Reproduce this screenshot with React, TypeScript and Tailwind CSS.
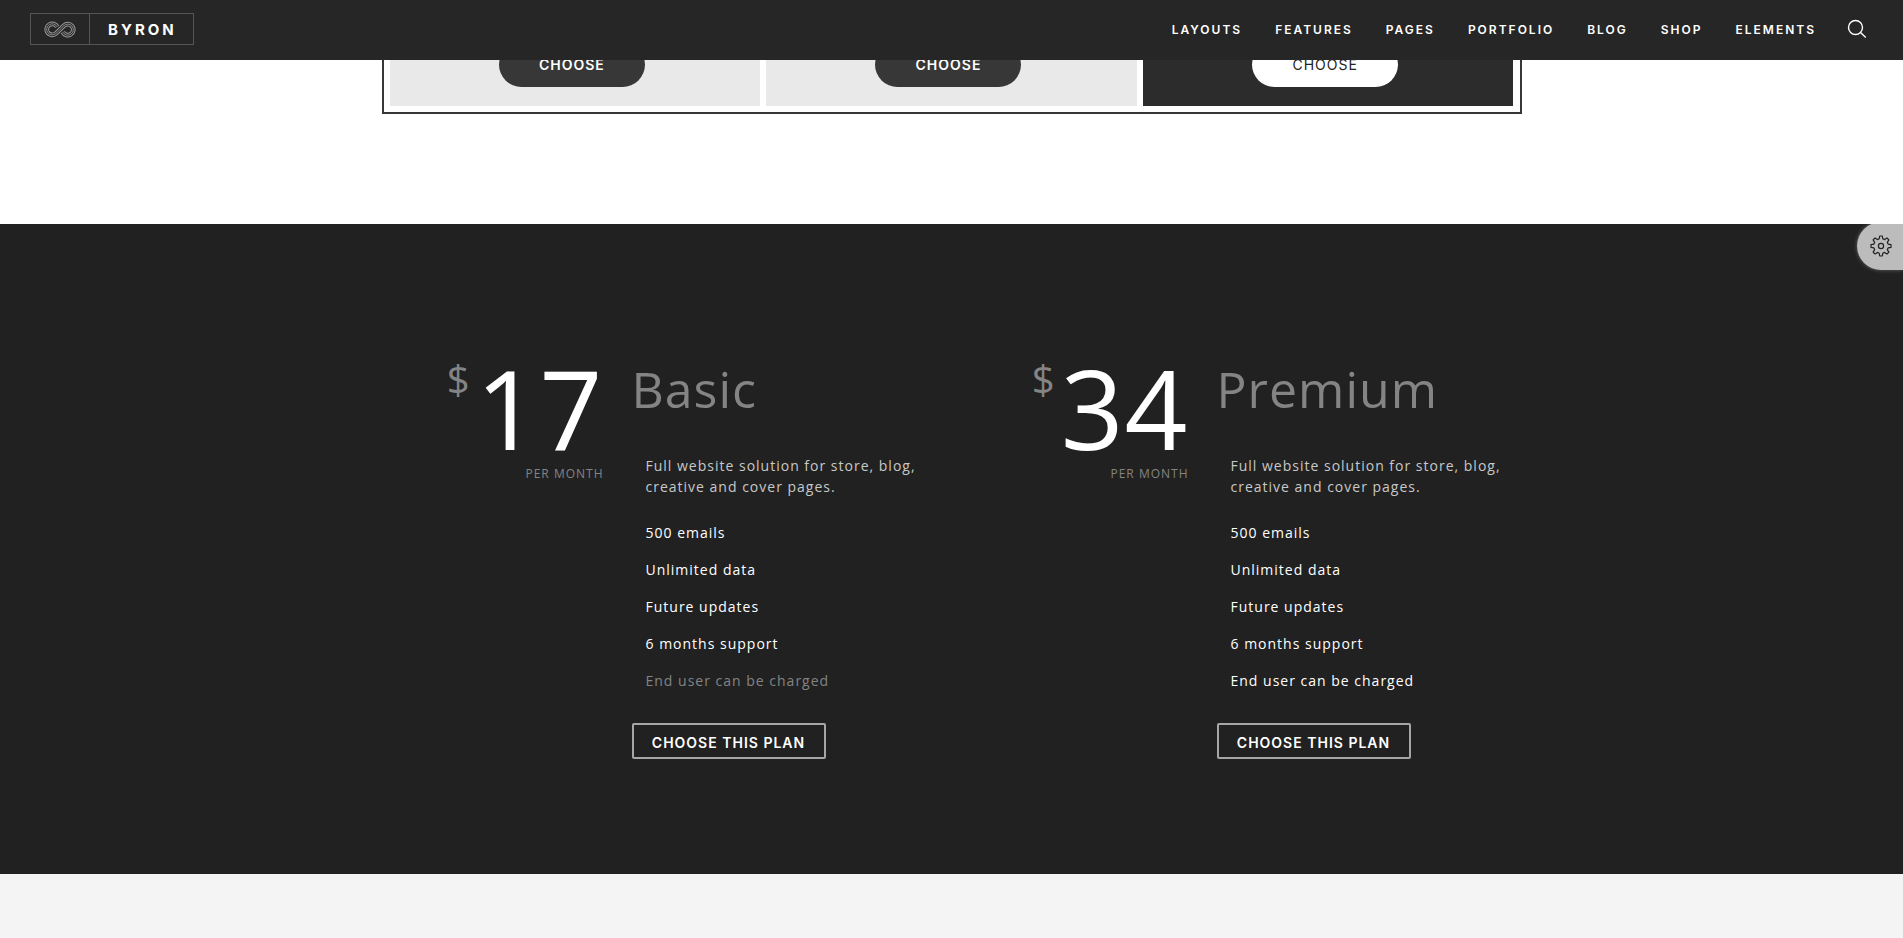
const navItems = ['Layouts', 'Features', 'Pages', 'Portfolio', 'Blog', 'Shop', 'Elements'];

type Plan = {
  name: string;
  price: number;
  features: { label: string; included: boolean }[];
};

const makeFeatures = (lastIncluded: boolean) => [
  { label: '500 emails', included: true },
  { label: 'Unlimited data', included: true },
  { label: 'Future updates', included: true },
  { label: '6 months support', included: true },
  { label: 'End user can be charged', included: lastIncluded },
];

const plans: Plan[] = [
  { name: 'Basic', price: 17, features: makeFeatures(false) },
  { name: 'Premium', price: 34, features: makeFeatures(true) },
];

const LOOP = 'M13.6 5.8 A5.7 5.7 0 1 0 12.4 12.5 L20.6 4.5 A5.7 5.7 0 1 1 19.4 11.2';

function Logo() {
  return (
    <a href="#" aria-label="Byron" className="mb-0.5 flex h-8 items-stretch border border-[#555] text-white">
      <span className="flex w-[59px] items-center justify-center border-r border-[#555]">
        <svg width="32" height="17" viewBox="0 0 33 17" fill="none">
          <path d={LOOP} stroke="#999" strokeWidth="4.8" />
          <path d={LOOP} stroke="#262626" strokeWidth="2.8" />
          <path d={LOOP} stroke="#999" strokeWidth="0.9" />
        </svg>
      </span>
      <span className="flex items-center pt-0.5 pr-4 pl-[18px] text-[15px] font-bold tracking-[3px]">BYRON</span>
    </a>
  );
}

function Header() {
  return (
    <header className="fixed inset-x-0 top-0 z-20 flex h-[60px] items-center justify-between bg-[#262626] pr-9 pl-[30px] font-[Inter,sans-serif]">
      <Logo />
      <nav className="flex items-center gap-[33px] text-[12px] font-semibold tracking-[2px] text-white uppercase">
        {navItems.map((item) => (
          <a key={item} href="#">
            {item}
          </a>
        ))}
        <button type="button" aria-label="Search" className="mb-0.5 -ml-0.5">
          <svg width="20" height="20" viewBox="0 0 20 20" fill="none" stroke="#fff" strokeWidth="1.4">
            <circle cx="8.5" cy="8.5" r="7" />
            <path d="M13.5 13.5 L18.8 18.5" />
          </svg>
        </button>
      </nav>
    </header>
  );
}

const columns = [
  { panel: 'bg-[#e9e9e9]', button: 'bg-[#373737] text-white font-semibold' },
  { panel: 'bg-[#e9e9e9]', button: 'bg-[#373737] text-white font-semibold' },
  { panel: 'bg-[#2c2c2c]', button: 'bg-white text-[#222] font-normal' },
];

function ComparisonTable() {
  return (
    <section className="bg-white px-4 pb-[110px]">
      <div className="mx-auto grid max-w-[1140px] grid-cols-3 gap-1.5 border-2 border-[#373737] p-1.5">
        {columns.map((column, index) => (
          <div key={index} className={`flex justify-center pt-[34px] pr-1.5 pb-[19px] ${column.panel}`}>
            <button
              type="button"
              className={`h-[45px] w-[146px] rounded-3xl font-[Inter,sans-serif] text-[14px] tracking-[1px] ${column.button}`}
            >
              CHOOSE
            </button>
          </div>
        ))}
      </div>
    </section>
  );
}

function PlanCard({ plan }: { plan: Plan }) {
  return (
    <article className="flex gap-7">
      <div className="w-[237px] shrink-0 text-right">
        <p className="flex items-start justify-end gap-1.5">
          <span className="text-[40px] leading-[40px] text-[#848484]">$</span>
          <span className="text-[110px] leading-[96px] tracking-[1px] text-white">{plan.price}</span>
        </p>
        <p className="mt-2 text-[12px] leading-[22px] tracking-[1px] text-[#848484]">PER MONTH</p>
      </div>
      <div>
        <h2 className="text-[50px] leading-[60px] tracking-[1px] text-[#848484]">{plan.name}</h2>
        <div className="mt-9 pl-3.5 text-[14px] leading-[21px] tracking-[1px]">
          <p className="max-w-[290px] text-[#c8c8c8]">Full website solution for store, blog, creative and cover pages.</p>
          <ul className="mt-[25px] space-y-4">
            {plan.features.map((feature) => (
              <li key={feature.label} className={feature.included ? 'text-white' : 'text-[#848484]'}>
                {feature.label}
              </li>
            ))}
          </ul>
        </div>
        <button
          type="button"
          className="mt-8 h-9 w-[194px] rounded-xs border-2 border-[#a6a6a6] pt-0.5 font-[Inter,sans-serif] text-[14px] font-semibold tracking-[1px] text-white"
        >
          CHOOSE THIS PLAN
        </button>
      </div>
    </article>
  );
}

function SettingsTab() {
  return (
    <button
      type="button"
      aria-label="Settings"
      className="fixed top-[222px] right-0 z-10 flex h-12 w-[46px] items-center justify-center rounded-l-full bg-white/70 pl-0.5 shadow-[0_0_4px_rgba(255,255,255,0.3)]"
    >
      <svg width="22" height="22" viewBox="0 0 22 22" fill="none" stroke="#222" strokeWidth="1.2" strokeLinejoin="round">
        <circle cx="11" cy="11" r="2.6" />
        <path d="M9.7 1h2.6l.5 2.8 1.8.8 2.4-1.6 1.9 1.9-1.6 2.4.8 1.8 2.9.6v2.6l-2.9.6-.8 1.8 1.6 2.4-1.9 1.9-2.4-1.6-1.8.8-.5 2.8H9.7l-.5-2.8-1.8-.8L5 19l-1.9-1.9 1.6-2.4-.8-1.8L1 12.3V9.7l2.9-.6.8-1.8L3.1 4.9 5 3l2.4 1.6 1.8-.8z" />
      </svg>
    </button>
  );
}

export default function App() {
  return (
    <div className="min-h-screen bg-[#f4f4f4] font-['Open_Sans',sans-serif]">
      <Header />
      <main>
        <ComparisonTable />
        <section className="bg-[#212121] px-4 pt-[135px] pb-[115px]">
          <div className="mx-auto grid max-w-[1170px] grid-cols-2">
            {plans.map((plan) => (
              <PlanCard key={plan.name} plan={plan} />
            ))}
          </div>
        </section>
      </main>
      <SettingsTab />
    </div>
  );
}
